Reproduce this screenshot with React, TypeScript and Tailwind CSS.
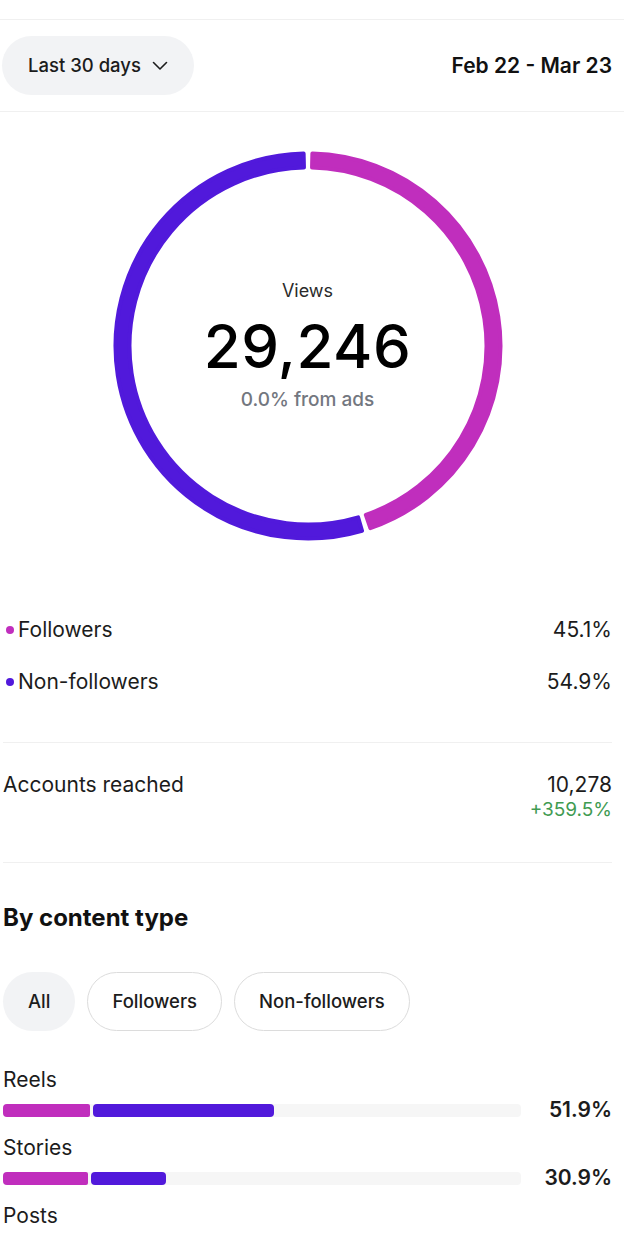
const MAGENTA = "#C02EBD";
const PURPLE = "#5119DB";

// point on circle, angle in degrees clockwise from 12 o'clock
function pt(cx: number, cy: number, r: number, deg: number) {
  const a = (deg * Math.PI) / 180;
  return [cx + r * Math.sin(a), cy - r * Math.cos(a)];
}

function sector(cx: number, cy: number, rOut: number, rIn: number, a0: number, a1: number) {
  const [x0, y0] = pt(cx, cy, rOut, a0);
  const [x1, y1] = pt(cx, cy, rOut, a1);
  const [x2, y2] = pt(cx, cy, rIn, a1);
  const [x3, y3] = pt(cx, cy, rIn, a0);
  const large = a1 - a0 > 180 ? 1 : 0;
  return `M${x0} ${y0} A${rOut} ${rOut} 0 ${large} 1 ${x1} ${y1} L${x2} ${y2} A${rIn} ${rIn} 0 ${large} 0 ${x3} ${y3} Z`;
}

function Donut() {
  const cx = 200;
  const cy = 200;
  const rOut = 192.5;
  const rIn = 178.5;
  const split = 162.4; // 45.1% followers
  const g = 1.3;
  return (
    <svg width="400" height="400" viewBox="0 0 400 400">
      <path
        d={sector(cx, cy, rOut, rIn, g, split - g)}
        fill={MAGENTA}
        stroke={MAGENTA}
        strokeWidth="4"
        strokeLinejoin="round"
      />
      <path
        d={sector(cx, cy, rOut, rIn, split + g, 360 - g)}
        fill={PURPLE}
        stroke={PURPLE}
        strokeWidth="4"
        strokeLinejoin="round"
      />
    </svg>
  );
}

const contentTypes = [
  { label: "Reels", pct: "51.9%", followers: 87, nonFollowers: 181 },
  { label: "Stories", pct: "30.9%", followers: 85, nonFollowers: 75 },
];

export default function App() {
  return (
    <div
      className="w-[624px] min-h-[1260px] bg-white text-[#1c1c1c]"
      style={{ fontFamily: "Inter, 'Noto Sans', sans-serif" }}
    >
      {/* Top strip */}
      <div className="h-[20px] border-b border-[#f0f0f0]" />

      {/* Range row */}
      <div className="flex items-center justify-between pl-[2px] pr-[12px] pt-[16px] pb-[16px] border-b border-[#f0f0f0]">
        <button className="h-[59px] pl-[26px] pr-[26px] rounded-full bg-[#f2f3f5] flex items-center gap-[11px] text-[18.5px] font-medium text-[#1c1c1c]">
          Last 30 days
          <svg width="16" height="10" viewBox="0 0 16 10" fill="none">
            <path d="M1.5 1.5 L8 8 L14.5 1.5" stroke="#1c1c1c" strokeWidth="1.6" strokeLinecap="round" strokeLinejoin="round" />
          </svg>
        </button>
        <span className="text-[21px] font-semibold text-[#111]">Feb 22 - Mar 23</span>
      </div>

      <div className="pl-[3px] pr-[12px]">
        {/* Donut */}
        <div className="mt-[34px] flex justify-center">
          <div className="relative w-[400px] h-[400px]">
            <Donut />
            <div className="absolute inset-0 flex flex-col items-center justify-center">
              <span className="text-[18px] leading-[22px] text-[#2a2a2a]">Views</span>
              <span className="mt-[11px] text-[60px] leading-[66px] font-medium text-black tracking-[0.5px]">29,246</span>
              <span className="mt-[9px] text-[19px] leading-[24px] font-medium text-[#737780]">0.0% from ads</span>
            </div>
          </div>
        </div>

        {/* Legend */}
        <div className="mt-[58px]">
          <div className="h-[52px] flex items-center justify-between text-[21px]">
            <div className="flex items-center gap-[4px]">
              <span className="w-[8px] h-[8px] rounded-full bg-[#C02EBD] ml-[3px]" />
              <span>Followers</span>
            </div>
            <span>45.1%</span>
          </div>
          <div className="h-[52px] flex items-center justify-between text-[21px]">
            <div className="flex items-center gap-[4px]">
              <span className="w-[8px] h-[8px] rounded-full bg-[#5119DB] ml-[3px]" />
              <span>Non-followers</span>
            </div>
            <span>54.9%</span>
          </div>
        </div>

        {/* Accounts reached */}
        <div className="mt-[34px] border-t border-b border-[#f0f0f0] pt-[30px] pb-[41px] flex justify-between">
          <span className="text-[21px] leading-[24px]">Accounts reached</span>
          <div className="flex flex-col items-end">
            <span className="text-[21px] leading-[24px]">10,278</span>
            <span className="text-[19px] leading-[22px] mt-[2px] text-[#3f9b52]">+359.5%</span>
          </div>
        </div>

        {/* By content type */}
        <h2 className="mt-[40px] text-[24px] leading-[30px] font-bold text-[#111]">By content type</h2>

        <div className="mt-[39px] flex gap-[12px]">
          <button className="h-[59px] px-[25px] rounded-full bg-[#f2f3f5] text-[18.5px] font-medium">All</button>
          <button className="h-[59px] px-[24px] rounded-full border-[1.5px] border-[#dcdcdc] text-[18.5px] font-medium">
            Followers
          </button>
          <button className="h-[59px] px-[24px] rounded-full border-[1.5px] border-[#dcdcdc] text-[18.5px] font-medium">
            Non-followers
          </button>
        </div>

        <div className="mt-[37px]">
          {contentTypes.map((c) => (
            <div key={c.label} className="mb-[14px]">
              <div className="text-[21px] leading-[24px]">{c.label}</div>
              <div className="mt-[6px] h-[24px] flex items-center">
                <div className="flex-1 h-[13px] rounded-[4px] bg-[#f6f6f6] flex">
                  <div className="h-full rounded-l-[4px] rounded-r-[2px]" style={{ width: c.followers, background: MAGENTA }} />
                  <div className="h-full rounded-[4px] ml-[3px]" style={{ width: c.nonFollowers, background: PURPLE }} />
                </div>
                <span className="w-[91px] text-right text-[21px] font-semibold">{c.pct}</span>
              </div>
            </div>
          ))}
          <div className="text-[21px] leading-[24px]">Posts</div>
        </div>
      </div>
    </div>
  );
}
